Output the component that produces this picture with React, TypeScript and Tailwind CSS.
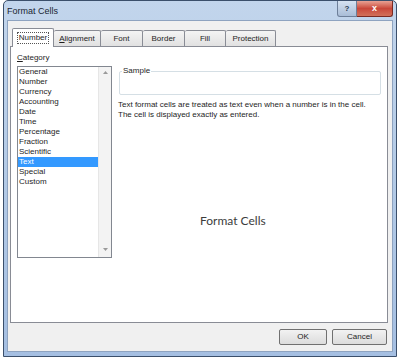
import React from 'react';

const categories = [
  'General',
  'Number',
  'Currency',
  'Accounting',
  'Date',
  'Time',
  'Percentage',
  'Fraction',
  'Scientific',
  'Text',
  'Special',
  'Custom',
];

const tabs = [
  { label: 'Number', w: 'w-[42px]' },
  { label: 'Alignment', w: 'w-[47px]' },
  { label: 'Font', w: 'w-[42px]' },
  { label: 'Border', w: 'w-[42px]' },
  { label: 'Fill', w: 'w-[41px]' },
  { label: 'Protection', w: 'w-[50px]' },
];

export default function App() {
  return (
    <div className="w-[400px] h-[359px] bg-white font-['Liberation_Sans',_sans-serif] text-[#1e1e1e]">
      {/* window frame */}
      <div className="ml-[3px] w-[394px] h-[357px] rounded-t-[5px] border border-[#3b4f6b] bg-gradient-to-b from-[#c2d5ec] via-[#b3cae6] to-[#a5bfe2] flex flex-col">
        {/* title bar */}
        <div className="h-[19px] flex items-start justify-between">
          <div className="pl-[3px] pt-[5px] text-[9px] leading-[11px] text-[#1a2533]">Format Cells</div>
          <div className="flex mr-[3px]">
            <div className="w-[20px] h-[16px] rounded-bl-[3px] border border-t-0 border-[#6d7f99] bg-gradient-to-b from-[#d6e2f1] to-[#a9bdd7] flex items-center justify-center text-[8px] font-bold text-[#2a3950]">
              ?
            </div>
            <div className="w-[36px] h-[16px] rounded-br-[3px] border border-t-0 border-l-0 border-[#7a2a22] bg-gradient-to-b from-[#e8a194] via-[#c9473a] to-[#d1705a] flex items-center justify-center text-[9px] font-bold text-white">
              x
            </div>
          </div>
        </div>

        {/* client area */}
        <div className="mx-[3px] h-[332px] border border-[#8ea3c0] bg-[#f0f0f0] flex flex-col">
          <div className="px-[2px] pt-[7px]">
            {/* tabs */}
            <div className="flex items-end pl-[2px] h-[18px]">
              {tabs.map((t, i) =>
                i === 0 ? (
                  <div
                    key={t.label}
                    className={`${t.w} h-[19px] -mb-px relative z-10 border border-b-0 border-[#898c95] bg-white rounded-t-[2px] flex items-center justify-center`}
                  >
                    <span className="text-[8px] leading-[10px] px-[1px] outline outline-1 outline-dotted outline-[#555]">
                      {t.label}
                    </span>
                  </div>
                ) : (
                  <div
                    key={t.label}
                    className={`${t.w} h-[16px] border border-b-0 border-l-0 border-[#898c95] bg-gradient-to-b from-[#f4f4f4] to-[#e1e1e1] rounded-t-[2px] flex items-center justify-center text-[8px] leading-[10px]`}
                  >
                    {t.label === 'Alignment' ? (
                      <span>
                        <span className="underline">A</span>lignment
                      </span>
                    ) : (
                      t.label
                    )}
                  </div>
                )
              )}
            </div>

            {/* tab panel */}
            <div className="h-[277px] mr-[2px] border border-[#898c95] bg-white flex">
              {/* category column */}
              <div className="pl-[6px] w-[107px] shrink-0">
                <div className="pt-[6px] h-[19px] text-[8px] leading-[10px]">
                  <span className="underline">C</span>ategory
                </div>
                <div className="w-[95px] h-[192px] border border-[#828790] flex">
                  <div className="flex-1">
                    {categories.map((c) => (
                      <div
                        key={c}
                        className={`h-[10px] pl-[1px] text-[8px] leading-[10px] ${
                          c === 'Text' ? 'bg-[#3399ff] text-white' : ''
                        }`}
                      >
                        {c}
                      </div>
                    ))}
                  </div>
                  <div className="w-[13px] bg-[#f3f3f3] border-l border-[#e6e6e6] flex flex-col justify-between items-center pt-[4px] pb-[6px]">
                    <svg width="5" height="3" viewBox="0 0 5 3">
                      <path d="M0 3 L2.5 0 L5 3 Z" fill="#9a9a9a" />
                    </svg>
                    <svg width="5" height="3" viewBox="0 0 5 3">
                      <path d="M0 0 L2.5 3 L5 0 Z" fill="#9a9a9a" />
                    </svg>
                  </div>
                </div>
              </div>

              {/* right column */}
              <div className="flex-1 pr-[6px] pt-[24px] flex flex-col">
                <div className="relative ml-[1px] h-[24px] border border-[#d5dfe5] rounded-[2px]">
                  <span className="absolute -top-[6px] left-[2px] bg-white px-[1px] text-[8px] leading-[10px]">
                    Sample
                  </span>
                </div>
                <div className="mt-[5px] text-[8px] leading-[10px] whitespace-nowrap">
                  Text format cells are treated as text even when a number is in the cell.
                  <br />
                  The cell is displayed exactly as entered.
                </div>
                <div className="mt-[94px] pl-[82px] font-['Lato',_sans-serif] text-[12px] leading-[14px] text-[#3c3c3c]">
                  Format Cells
                </div>
              </div>
            </div>
          </div>

          {/* buttons */}
          <div className="mt-[6px] flex justify-end gap-[5px] pr-[5px]">
            <div className="w-[48px] h-[16px] rounded-[2px] border border-[#707070] bg-gradient-to-b from-[#f2f2f2] to-[#dcdcdc] flex items-center justify-center text-[8px]">
              OK
            </div>
            <div className="w-[55px] h-[16px] rounded-[2px] border border-[#707070] bg-gradient-to-b from-[#f2f2f2] to-[#dcdcdc] flex items-center justify-center text-[8px]">
              Cancel
            </div>
          </div>
        </div>
      </div>
    </div>
  );
}
